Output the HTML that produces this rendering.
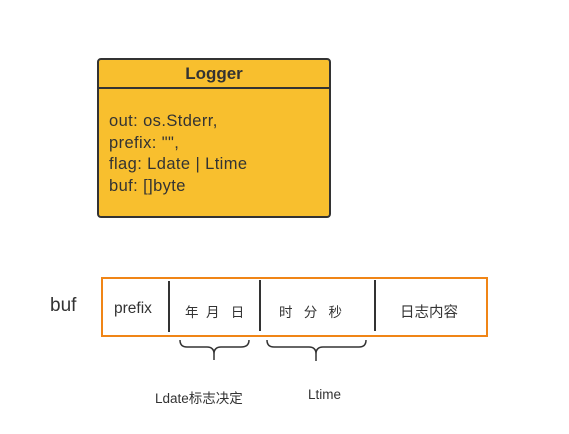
<!DOCTYPE html>
<html><head><meta charset="utf-8"><style>
body{margin:0;width:569px;height:434px;background:#fff;position:relative;font-family:"Liberation Sans","Noto Sans CJK SC",sans-serif;color:#333;overflow:hidden}
.a{position:absolute;white-space:nowrap}
</style></head><body>
<div class="a" style="left:97px;top:58px;width:230px;height:156px;background:#f8bf2e;border:2px solid #333;border-radius:4px"></div>
<div class="a" style="left:99px;top:87px;width:230px;height:2px;background:#333"></div>
<div class="a" style="left:99px;top:64px;width:230px;text-align:center;font-size:17px;font-weight:bold">Logger</div>
<div class="a" style="left:109px;top:111px;font-size:16.5px;letter-spacing:0.4px;line-height:21.7px">out: os.Stderr,<br>prefix: "",<br>flag: Ldate | Ltime<br>buf: []byte</div>
<div class="a" style="left:50px;top:295px;font-size:19px">buf</div>
<div class="a" style="left:101px;top:277px;width:383px;height:56px;border:2px solid #f08516"></div>
<div class="a" style="left:168px;top:281px;width:2px;height:51px;background:#333"></div>
<div class="a" style="left:259px;top:280px;width:2px;height:51px;background:#333"></div>
<div class="a" style="left:374px;top:280px;width:2px;height:51px;background:#333"></div>
<div class="a" style="left:114px;top:300px;font-size:15.5px">prefix</div>
<div class="a" style="left:185px;top:301px;font-size:13.5px">年&nbsp;&nbsp;月&nbsp;&nbsp;&nbsp;日</div>
<div class="a" style="left:279px;top:301px;font-size:13.5px">时&nbsp;&nbsp;&nbsp;分&nbsp;&nbsp;&nbsp;秒</div>
<div class="a" style="left:400px;top:301px;font-size:14.5px">日志内容</div>
<svg class="a" style="left:0;top:0" width="569" height="434" fill="none" stroke="#333" stroke-width="1.5">
<path d="M180 340 Q180 347 187 347 L207 347 Q214 347 214 354 L214 360 M214 354 Q214 347 221 347 L241 347 Q249 347 249 340"/>
<path d="M267 340 Q267 347 274 347 L309 347 Q316 347 316 354 L316 361 M316 354 Q316 347 323 347 L359 347 Q366 347 366 340"/>
</svg>
<div class="a" style="left:155px;top:387px;font-size:13.5px">Ldate标志决定</div>
<div class="a" style="left:308px;top:387px;font-size:13.5px">Ltime</div>
</body></html>
